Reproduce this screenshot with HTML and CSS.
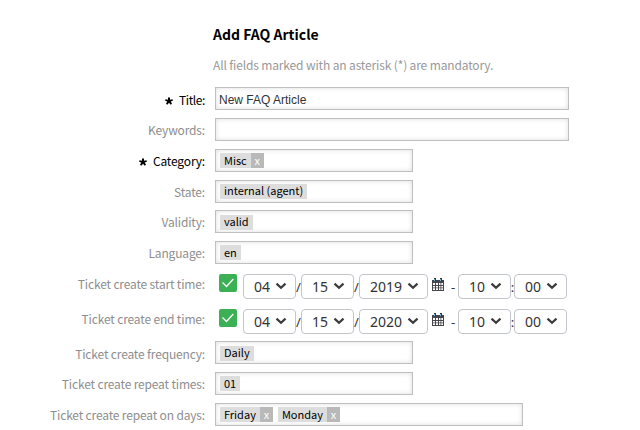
FILE: index.html
```
<!DOCTYPE html>
<html lang="en">
<head>
<meta charset="utf-8">
<title>Add FAQ Article</title>
<link rel="stylesheet" href="styles.css">
</head>
<body>
<svg class="defs" aria-hidden="true">
  <symbol id="star" viewBox="0 0 8 8"><path d="M3 .5H5V2.700L7.500 2.300L7.900 3.800L5.700 4.600L7 6.800L5.700 7.700L4 5.700L2.300 7.700L1 6.800L2.300 4.600L.1 3.800L.5 2.300L3 2.700z" fill="#000"/></symbol>
  <symbol id="check" viewBox="0 0 18 18"><path d="M3.500 8.500L7.500 12.500L14.300 5" fill="none" stroke="#fff" stroke-width="1.300"/></symbol>
  <symbol id="chevron" viewBox="0 0 12 8"><path d="M1.500 1.600L6 5.800L10.500 1.600" fill="none" stroke="#3c3c3c" stroke-width="2.200"/></symbol>
  <symbol id="calendar" viewBox="0 0 12 13"><path d="M0 2h12v11H0z" fill="#45454b"/><path d="M2 0h2v3H2zM8 0h2v3H8z" fill="#333"/><path d="M2 1h1v2h-1zM8 1h1v2h-1z" fill="#6fb4e0"/><path d="M1 5h2v2H1zM4 5h2v2H4zM7 5h1.500v2H7zM9.300 5h1.700v2H9.300zM1 8h2v1.500H1zM4 8h2v1.500H4zM7 8h1.500v1.500H7zM9.300 8h1.700v1.500H9.300zM1 10.300h2V12H1zM4 10.300h2V12H4zM7 10.300h1.500V12H7zM9.300 10.300h1.700V12H9.300z" fill="#fff"/></symbol>
</svg>
<main class="form">
  <h1 class="title">Add FAQ Article</h1>
  <p class="hint">All fields marked with an asterisk (*) are mandatory.</p>
  <div class="row first"><label class="label required low narrow"><svg class="star"><use href="#star"/></svg>Title:</label><div class="field wide plain">New FAQ Article</div></div>
  <div class="row"><label class="label">Keywords:</label><div class="field wide"></div></div>
  <div class="row"><label class="label required"><svg class="star"><use href="#star"/></svg>Category:</label><div class="field"><span class="tag">Misc<b class="remove">x</b></span></div></div>
  <div class="row"><label class="label">State:</label><div class="field"><span class="tag raised">internal (agent)</span></div></div>
  <div class="row tight"><label class="label">Validity:</label><div class="field down"><span class="tag raised">valid</span></div></div>
  <div class="row"><label class="label">Language:</label><div class="field"><span class="tag">en</span></div></div>
  <div class="row time">
    <label class="label">Ticket create start time:</label>
    <div class="date"><span class="checkbox"><svg><use href="#check"/></svg></span><span class="select">04<svg class="chevron"><use href="#chevron"/></svg></span><span class="sep">/</span><span class="select">15<svg class="chevron"><use href="#chevron"/></svg></span><span class="sep">/</span><span class="select year">2019<svg class="chevron"><use href="#chevron"/></svg></span><svg class="calendar"><use href="#calendar"/></svg><span class="dash">-</span><span class="select">10<svg class="chevron"><use href="#chevron"/></svg></span><span class="sep colon">:</span><span class="select">00<svg class="chevron"><use href="#chevron"/></svg></span></div>
  </div>
  <div class="row time end">
    <label class="label">Ticket create end time:</label>
    <div class="date"><span class="checkbox"><svg><use href="#check"/></svg></span><span class="select">04<svg class="chevron"><use href="#chevron"/></svg></span><span class="sep">/</span><span class="select">15<svg class="chevron"><use href="#chevron"/></svg></span><span class="sep">/</span><span class="select year">2020<svg class="chevron"><use href="#chevron"/></svg></span><svg class="calendar"><use href="#calendar"/></svg><span class="dash">-</span><span class="select">10<svg class="chevron"><use href="#chevron"/></svg></span><span class="sep colon">:</span><span class="select">00<svg class="chevron"><use href="#chevron"/></svg></span></div>
  </div>
  <div class="row tight"><label class="label low">Ticket create frequency:</label><div class="field down"><span class="tag raised">Daily</span></div></div>
  <div class="row"><label class="label">Ticket create repeat times:</label><div class="field"><span class="tag">01</span></div></div>
  <div class="row"><label class="label">Ticket create repeat on days:</label><div class="field days"><span class="tag">Friday<b class="remove">x</b></span><span class="tag">Monday<b class="remove">x</b></span></div></div>
</main>
</body>
</html>
```
FILE: styles.css
```
* { box-sizing: border-box; }
body { margin: 0; background: #fff; color: #000; font: 12px/23px "Noto Sans CJK SC", sans-serif; }
.defs { display: none; }
.form { width: 640px; height: 430px; overflow: hidden; padding-top: 23px; }
.title { margin: 0 0 0 213px; height: 22px; font-size: 14px; line-height: 22px; font-weight: 700; }
.hint { margin: 8px 0 0 213px; height: 24px; line-height: 24px; color: #999; letter-spacing: -.14px; }
.row { display: grid; grid-template-columns: 205px 1fr; column-gap: 10px; height: 23px; margin-top: 8px; }
.row.first { margin-top: 10px; }
.row.tight { margin-top: 7px; }
.row.time { height: 25px; margin-top: 10px; }
.row.end { margin-top: 10px; }
.label { display: flex; justify-content: flex-end; align-items: center; height: 23px; padding-bottom: 1px; color: #8e8e8e; white-space: nowrap; letter-spacing: -.16px; }
.low { padding: 1px 0 0; }
.narrow { letter-spacing: -.4px; }
.time .label { height: 19px; }
.required { color: #000; }
.star { width: 8px; height: 8px; margin: 4px 6px 0 0; }
.field { display: flex; gap: 5px; width: 198px; height: 23px; padding: 3px 4px; border: 1px solid #bfbfbf; box-shadow: inset 0 0 5px #ddd; }
.down { padding-top: 4px; }
.wide { width: 354px; }
.days { width: 308px; }
.plain { padding: 1px 3px; font: 12px/22px "Liberation Sans", sans-serif; color: #333; }
.tag { display: flex; height: 15px; padding: 0 4px; background: #ddd; font-size: 11px; line-height: 14px; white-space: nowrap; }
.raised { line-height: 12px; }
.remove { width: 13px; height: 15px; margin: 0 -4px 0 4px; background: #b9b9b9; color: #fff; font-weight: 400; text-align: center; }
.date { display: flex; padding-left: 4px; font: 14px/24px "Noto Sans", sans-serif; color: #333; }
.checkbox { width: 18px; height: 18px; margin-right: 6px; border-radius: 2px; background: #3bb054; }
.checkbox svg { display: block; width: 18px; height: 18px; }
.select { display: flex; justify-content: space-between; width: 53px; height: 25px; padding: 0 8px 0 10px; border: 1px solid #c2c5cc; border-radius: 4px; }
.year { width: 69px; }
.chevron { width: 12px; height: 8px; margin-top: 7px; }
.sep { width: 5px; text-align: center; font-size: 13px; line-height: 27px; }
.colon { width: 3px; display: flex; justify-content: center; }
.calendar { width: 12px; height: 13px; margin: 4px 0 0 4px; }
.dash { width: 14px; padding-left: 7px; line-height: 27px; font-size: 13px; }
```
